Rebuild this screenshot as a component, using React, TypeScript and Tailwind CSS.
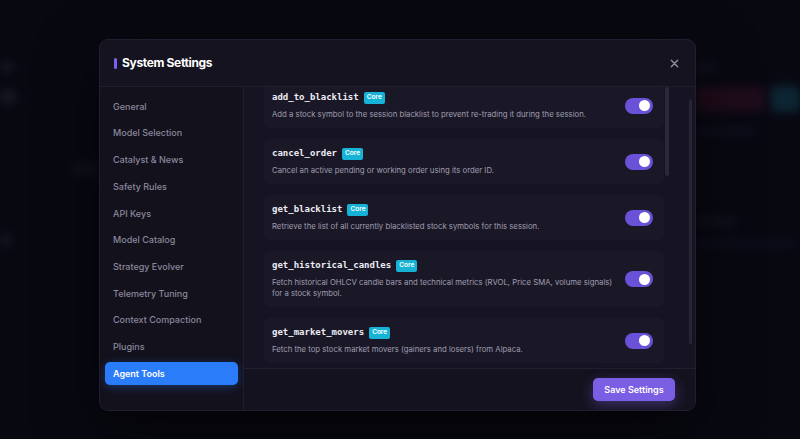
import React from 'react';

type Tool = { name: string; description: string };

const tools: Tool[] = [
  {
    name: 'add_to_blacklist',
    description:
      'Add a stock symbol to the session blacklist to prevent re-trading it during the session.',
  },
  {
    name: 'cancel_order',
    description: 'Cancel an active pending or working order using its order ID.',
  },
  {
    name: 'get_blacklist',
    description: 'Retrieve the list of all currently blacklisted stock symbols for this session.',
  },
  {
    name: 'get_historical_candles',
    description:
      'Fetch historical OHLCV candle bars and technical metrics (RVOL, Price SMA, volume signals) for a stock symbol.',
  },
  {
    name: 'get_market_movers',
    description: 'Fetch the top stock market movers (gainers and losers) from Alpaca.',
  },
];

const navItems = [
  'General',
  'Model Selection',
  'Catalyst & News',
  'Safety Rules',
  'API Keys',
  'Model Catalog',
  'Strategy Evolver',
  'Telemetry Tuning',
  'Context Compaction',
  'Plugins',
  'Agent Tools',
];

const Toggle = () => (
  <div className="w-[28px] h-[16px] rounded-full bg-[#6b51d8] flex items-center justify-end pr-[3px] shrink-0">
    <span className="w-[11px] h-[11px] rounded-full bg-white"></span>
  </div>
);

const ToolCard = ({ tool }: { tool: Tool }) => (
  <div className="flex items-center bg-[#1a1827] rounded-md pl-[8px] pr-[11px] pt-[8px] pb-[8px]">
    <div className="flex-grow">
      <div className="flex items-center gap-[5px] h-[14px]">
        <span className="font-['DejaVu_Sans_Mono',monospace] font-bold text-[9px] text-[#ececf3]">
          {tool.name}
        </span>
        <span className="bg-[#16b3d6] text-white text-[6.5px] font-semibold rounded-[2px] px-[3px] h-[12px] flex items-center">
          Core
        </span>
      </div>
      <p className="mt-[4px] text-[7.75px] leading-[11px] text-[#a09eb1] pr-[8px]">
        {tool.description}
      </p>
    </div>
    <Toggle />
  </div>
);

const Backdrop = () => (
  <div className="w-full h-full flex blur-[5px] opacity-80">
    <div className="w-[99px] pt-[62px] flex flex-col gap-[18px]">
      <div className="w-[14px] h-[10px] bg-[#2a2a3a] rounded"></div>
      <div className="w-[16px] h-[14px] bg-[#2c2c3c] rounded"></div>
      <div className="ml-[70px] mt-[40px] w-[30px] h-[14px] bg-[#1c1b2a] rounded"></div>
      <div className="mt-[40px] w-[12px] h-[12px] bg-[#262636] rounded"></div>
    </div>
    <div className="flex-grow"></div>
    <div className="w-[104px] pt-[64px] flex flex-col">
      <div className="w-[20px] h-[8px] bg-[#24233a] rounded"></div>
      <div className="flex gap-[6px] mt-[14px]">
        <div className="w-[72px] h-[26px] bg-[#3a1528] rounded"></div>
        <div className="w-[30px] h-[26px] bg-[#154a5c] rounded"></div>
      </div>
      <div className="mt-[16px] w-[60px] h-[6px] bg-[#22213a] rounded"></div>
      <div className="mt-[82px] w-[40px] h-[10px] bg-[#1f1e2e] rounded"></div>
      <div className="mt-[14px] w-[100px] h-[6px] bg-[#1a1d34] rounded"></div>
    </div>
  </div>
);

export default function App() {
  return (
    <div className="relative w-[800px] h-[439px] overflow-hidden bg-[#0a0a15] font-['Inter',sans-serif]">
      <Backdrop />
      <div className="absolute inset-0 bg-[#05050c]/40"></div>

      <div className="absolute left-[99px] top-[39px] w-[597px] h-[372px] rounded-[9px] bg-[#15131f] border border-[#211e30] shadow-[0_20px_60px_rgba(0,0,0,0.6)] flex flex-col overflow-hidden">
        <div className="h-[47px] shrink-0 flex items-center justify-between pl-[14px] pr-[16px] border-b border-[#1f1d2c]">
          <div className="flex items-center gap-[5px]">
            <span className="w-[3px] h-[11px] rounded-full bg-[#7c61ee]"></span>
            <h2 className="text-[12px] font-bold text-white tracking-[-0.35px]">System Settings</h2>
          </div>
          <svg width="9" height="9" viewBox="0 0 10 10" className="text-[#8d8b9c]">
            <path d="M1.5 1.5 L8.5 8.5 M8.5 1.5 L1.5 8.5" stroke="currentColor" strokeWidth="1.6" strokeLinecap="round" />
          </svg>
        </div>

        <div className="flex flex-grow min-h-0">
          <aside className="w-[144px] shrink-0 border-r border-[#1f1d2c] bg-[#13111c] px-[5px] pt-[8px] flex flex-col gap-[3.7px]">
            {navItems.map((item) =>
              item === 'Agent Tools' ? (
                <div
                  key={item}
                  className="h-[23px] flex items-center pl-[8px] rounded-[5px] bg-[#2b7cf9] text-white text-[9px] font-semibold shadow-[0_2px_10px_rgba(43,124,249,0.35)]"
                >
                  {item}
                </div>
              ) : (
                <div key={item} className="h-[23px] flex items-center pl-[8px] text-[9px] font-medium text-[#8a889b]">
                  {item}
                </div>
              )
            )}
          </aside>

          <div className="flex-grow flex flex-col min-w-0 bg-[#161422]">
            <div className="h-[281px] flex overflow-hidden">
              <div className="w-[420px] pl-[20px] overflow-hidden">
                <div className="-mt-[4px] flex flex-col gap-[11px]">
                  {tools.map((tool) => (
                    <ToolCard key={tool.name} tool={tool} />
                  ))}
                </div>
              </div>
              <div className="w-[6px] ml-[1px]">
                <div className="w-[4px] h-[89px] rounded-full bg-[#2a2839]"></div>
              </div>
              <div className="flex-grow"></div>
              <div className="w-[4px] mr-[2px] pt-[12px]">
                <div className="w-[3px] h-[245px] rounded-full bg-[#262435]"></div>
              </div>
            </div>
            <div className="flex-grow border-t border-[#221f30] bg-[#14121e] flex items-center justify-end pr-[20px]">
              <button className="w-[82px] h-[23px] rounded-[5px] bg-[#7a5ee3] text-white text-[9px] font-semibold shadow-[0_4px_14px_rgba(122,94,227,0.4)]">
                Save Settings
              </button>
            </div>
          </div>
        </div>
      </div>
    </div>
  );
}
